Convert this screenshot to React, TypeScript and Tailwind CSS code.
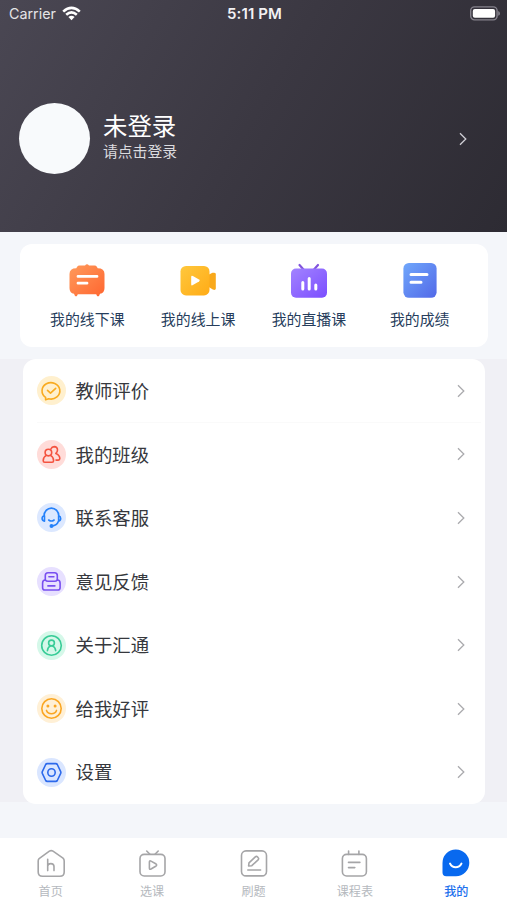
import type { ReactNode } from "react";

const Chevron = ({ className }: { className: string }) => (
  <svg className={className} width="8" height="14" viewBox="0 0 8 14" fill="none" stroke="currentColor" strokeWidth="1.3">
    <path d="M1 1.2 6.8 7 1 12.8" />
  </svg>
);

const shortcuts: { label: string; icon: ReactNode }[] = [
  {
    label: "我的线下课",
    icon: (
      <>
        <defs>
          <linearGradient id="orange" x1="0" y1="0" x2="1" y2="1">
            <stop stopColor="#ff9b5c" />
            <stop offset="1" stopColor="#ff6630" />
          </linearGradient>
        </defs>
        <path
          d="M8 4.9Q8.8 3.6 10.5 3.6H16L17 2.6Q18 2 19 2.6L20 3.6H25.5Q27.2 3.6 28 4.9L28.7 6.2Q35.5 6.2 35.5 12V26Q35.5 31.2 31 31.8L30 34Q28.5 34.8 27.8 33.4L27.2 32.3H8.8L8.2 33.4Q7.5 34.8 6 34L5 31.8Q.5 31.2 .5 26V12Q.5 6.2 7.3 6.2Z"
          fill="url(#orange)"
        />
        <path d="M9 14.4H28M9 21.2H18" stroke="#fff" strokeWidth="2.8" strokeLinecap="round" />
      </>
    ),
  },
  {
    label: "我的线上课",
    icon: (
      <>
        <defs>
          <linearGradient id="yellow" x1="0" y1="0" x2="1" y2="1">
            <stop stopColor="#ffc83d" />
            <stop offset="1" stopColor="#ffab16" />
          </linearGradient>
        </defs>
        <path d="M28 13 32.5 10.8Q35.8 10.2 35.8 12V26.5Q35.8 28.5 32.8 27.6L28 24.5Z" fill="#f9a91b" />
        <rect x=".5" y="4" width="29" height="29.4" rx="5.5" fill="url(#yellow)" />
        <path d="M11.2 15Q11.2 13.2 12.9 14.1L19 17.6Q20.5 18.6 19 19.6L12.9 23.1Q11.2 24 11.2 22.2Z" fill="#fff" />
      </>
    ),
  },
  {
    label: "我的直播课",
    icon: (
      <>
        <defs>
          <linearGradient id="purple" x1="0" y1="0" x2="1" y2="1">
            <stop stopColor="#a283ff" />
            <stop offset="1" stopColor="#7b4eff" />
          </linearGradient>
        </defs>
        <path d="M8.5 3 12.5 7.5M27 3 23 7.5" stroke="#8154dc" strokeWidth="2.2" strokeLinecap="round" />
        <rect x="0" y="6.5" width="36" height="29.3" rx="5" fill="url(#purple)" />
        <path d="M11.8 20.5V27M18.2 16.5V27M24.8 23V27" stroke="#fff" strokeWidth="3" strokeLinecap="round" />
      </>
    ),
  },
  {
    label: "我的成绩",
    icon: (
      <>
        <defs>
          <linearGradient id="blue" x1="0" y1="0" x2="1" y2="1">
            <stop stopColor="#70a7fb" />
            <stop offset="1" stopColor="#5269e8" />
          </linearGradient>
        </defs>
        <rect x="1.4" y="1" width="33.2" height="34.8" rx="5.5" fill="url(#blue)" />
        <path d="M9 12.5H25M9 20.3H19" stroke="#fff" strokeWidth="3" strokeLinecap="round" />
      </>
    ),
  },
];

const rows: { label: string; color: string; icon: ReactNode }[] = [
  {
    label: "教师评价",
    color: "bg-[#fff0ce] text-[#f9ab20]",
    icon: (
      <>
        <path d="M8.6 23.8V21.4A8.9 8.2 0 1 1 11.8 22.8Z" />
        <path d="m10.5 14.3 3 2.8 5.2-4.8" />
      </>
    ),
  },
  {
    label: "我的班级",
    color: "bg-[#ffdcd9] text-[#f4533f]",
    icon: (
      <>
        <circle cx="11.4" cy="12.6" r="3.3" />
        <path d="M9.4 15.4Q6.2 17 6.2 20.8Q6.2 22.3 7.7 22.3H15.1Q16.6 22.3 16.6 20.8Q16.6 17 13.4 15.4" />
        <path d="M14 8.8Q14.9 6.6 17.2 6.6Q20.5 6.8 20.5 10.1Q20.5 12.3 18.8 13.4Q22.8 15 22.8 18.6Q22.8 20.1 21.3 20.1H19" />
      </>
    ),
  },
  {
    label: "联系客服",
    color: "bg-[#dce8ff] text-[#2581fa]",
    icon: (
      <>
        <path d="M7 13A7.4 7.9 0 0 1 21.8 13M7.1 12.8Q5.1 13.2 5.1 15.5T7.5 18.1V12.8M21.8 12.8Q23.7 13.2 23.7 15.5T21.6 18.1V12.8M21.4 18.2Q20.2 21.9 15.7 22.9M11.7 17Q14.4 19.1 17.1 17" />
        <circle cx="14.5" cy="22.9" r="1.2" fill="currentColor" />
      </>
    ),
  },
  {
    label: "意见反馈",
    color: "bg-[#e7e0ff] text-[#784ff0]",
    icon: (
      <>
        <path d="M8.3 13V8.4Q8.3 5.7 11 5.7H17.6Q20.3 5.7 20.3 8.4V13" />
        <path d="M11.9 9.7H16.9M10.9 18.9H17.9" />
        <path d="M8.3 13Q5.6 13.2 5.6 16V20.7Q5.6 23 7.9 23H20.8Q23.1 23 23.1 20.7V16Q23.1 13.2 20.3 13Q19.3 14.3 17.7 14.3H11Q9.3 14.3 8.3 13Z" />
      </>
    ),
  },
  {
    label: "关于汇通",
    color: "bg-[#d5f8e9] text-[#38cc97]",
    icon: (
      <>
        <circle cx="14.5" cy="14.5" r="9.8" />
        <circle cx="14.5" cy="12" r="2.9" />
        <path d="M10.4 19.7Q10.7 16.1 13.7 14.8M18.7 19.7Q18.3 16.1 15.3 14.8" />
      </>
    ),
  },
  {
    label: "给我好评",
    color: "bg-[#fff0d6] text-[#faa622]",
    icon: (
      <>
        <circle cx="14.5" cy="14.5" r="9.7" />
        <path d="M9.5 16.4Q10.7 19.7 14.5 19.7T19.5 16.4" />
        <circle cx="10.9" cy="11.9" r=".7" fill="currentColor" />
        <circle cx="18.1" cy="11.9" r=".7" fill="currentColor" />
      </>
    ),
  },
  {
    label: "设置",
    color: "bg-[#dae6ff] text-[#2c69eb]",
    icon: (
      <>
        <path d="M10.2 5.6H18.8Q19.8 5.6 20.3 6.5L23.7 13.6Q24.1 14.5 23.7 15.4L20.3 22.5Q19.8 23.4 18.8 23.4H10.2Q9.2 23.4 8.7 22.5L5.3 15.4Q4.9 14.5 5.3 13.6L8.7 6.5Q9.2 5.6 10.2 5.6Z" />
        <circle cx="14.5" cy="14.5" r="3.7" />
      </>
    ),
  },
];

const tabs: { label: string; icon: ReactNode; active?: boolean }[] = [
  {
    label: "首页",
    icon: (
      <>
        <path d="M3.1 10.6 13.4 3.2Q15.2 2 17 3.2L27 10.1Q28.2 11.2 28.2 13V24Q28.2 28.3 23.9 28.3H6.5Q2.2 28.3 2.2 24V13Q2.2 11.3 3.1 10.6Z" />
        <path d="M11.7 11.2V22.6M11.7 18Q12 15.6 14.8 15.6Q18 15.6 18 18.6V22.6" />
      </>
    ),
  },
  {
    label: "选课",
    icon: (
      <>
        <rect x="3" y="6.4" width="25" height="21.6" rx="4.2" />
        <path d="m9.7 3 3 3M21.2 3l-3 3" />
        <path d="M12.4 14Q12.4 12.2 14 13.1L18.7 15.8Q20.6 17 18.7 18.2L14 21Q12.4 21.9 12.4 20Z" />
      </>
    ),
  },
  {
    label: "刷题",
    icon: (
      <>
        <rect x="2.5" y="2.9" width="25" height="25" rx="4.5" />
        <path d="M9.6 18 10 14.8 16.3 8.9Q17.5 7.9 18.6 9L19.2 9.7Q20.2 10.8 19.1 11.8L12.8 17.7ZM8.8 22H21.6" />
      </>
    ),
  },
  {
    label: "课程表",
    icon: (
      <>
        <rect x="2.4" y="6.4" width="24" height="21.6" rx="4.2" />
        <path d="M8.6 3V6.4M18.9 3V6.4M8.5 14.4H19.9M8.5 19.6H14.8" />
      </>
    ),
  },
  {
    label: "我的",
    active: true,
    icon: (
      <>
        <path d="M1.5 15.1A13.4 13.4 0 1 1 14.9 28.2H5.2Q1.5 28.2 1.5 24.5Z" fill="#0869ef" stroke="none" />
        <path d="M9 15.5Q10.9 19.3 14.7 19.3T20.5 15.5" stroke="#fff" strokeWidth="1.9" />
      </>
    ),
  },
];

export default function App() {
  return (
    <div className="flex h-[900px] w-[507px] flex-col overflow-hidden bg-[#f4f6fa] font-['Inter','Noto_Sans_CJK_SC',sans-serif]">
      <header className="flex h-[232px] shrink-0 flex-col bg-[linear-gradient(120deg,#4a4753,#3b3842_50%,#2d2b33)] text-white">
        <div className="grid h-7 grid-cols-3 items-center pl-[9px] pr-[7px] text-[14.3px]">
          <div className="flex items-center gap-[6px] text-[#e5e4e7]">
            <span>Carrier</span>
            <svg className="-mt-[2px]" width="19" height="15" viewBox="0 0 19 15" fill="none" stroke="#fff" strokeWidth="2.6">
              <path d="M1.2 5.6Q9.5-2 17.8 5.6M4.2 8.8Q9.5 4 14.8 8.8" />
              <path d="M6.4 11Q9.5 8.6 12.6 11L9.5 14.2Z" fill="#fff" stroke="none" />
            </svg>
          </div>
          <div className="whitespace-nowrap text-center text-[15px] font-semibold tracking-[0.12px] text-[#f2f1f3]">5:11 PM</div>
          <svg className="-mt-[2px] justify-self-end" width="31" height="15" viewBox="0 0 31 15" fill="none">
            <rect x="1.7" y=".9" width="26.4" height="13" rx="3.8" stroke="#85828c" strokeWidth="1.4" />
            <rect x="3.8" y="3" width="22.3" height="8.8" rx="2" fill="#fff" />
            <path d="M29.2 5V9.8Q31 9 31 7.4T29.2 5Z" fill="#85828c" />
          </svg>
        </div>
        <div className="mt-[75px] flex h-[71px] items-center pl-[19px] pr-10">
          <div className="size-[71px] rounded-full bg-[#f8fafc]" />
          <div className="-mt-[3px] ml-[13px] flex flex-col">
            <span className="text-[24.4px] leading-[29px]">未登录</span>
            <span className="text-[14.8px] leading-[22px] text-[#dcdbdf]">请点击登录</span>
          </div>
          <Chevron className="ml-auto text-[#d0cfd5]" />
        </div>
      </header>

      <section className="mx-auto mt-3 flex h-[103px] w-[468px] shrink-0 justify-center rounded-xl bg-white pt-[18px]">
        {shortcuts.map((item) => (
          <div key={item.label} className="flex w-[110.8px] flex-col items-center">
            <svg width="36" height="36" viewBox="0 0 36 36" fill="none">
              {item.icon}
            </svg>
            <span className="mt-[11px] text-[14.9px] leading-[22px] text-[#263d5c]">{item.label}</span>
          </div>
        ))}
      </section>

      <div className="mt-3 h-[445px] shrink-0 bg-[linear-gradient(#f0f0f5,#f0f0f5)] bg-[length:100%_443px] bg-no-repeat px-[22.5px]">
        <ul className="flex h-full flex-col rounded-[13px] bg-white">
          {rows.map((row, index) => (
            <li key={row.label} className="flex flex-1 pl-[14px] pr-1">
              <div className={`flex flex-1 items-center border-b pr-4 pt-px ${index === 0 ? "border-[#fafafa]" : "border-transparent"}`}>
                <span className={`flex size-[29px] items-center justify-center rounded-full ${row.color}`}>
                  <svg width="29" height="29" viewBox="0 0 29 29" fill="none" stroke="currentColor" strokeWidth="1.6" strokeLinecap="round" strokeLinejoin="round">
                    {row.icon}
                  </svg>
                </span>
                <span className="ml-[10px] flex-1 pt-[2px] text-[18.4px] text-[#36383d]">{row.label}</span>
                <Chevron className="text-[#aaaaae]" />
              </div>
            </li>
          ))}
        </ul>
      </div>

      <nav className="mt-auto flex h-[62px] shrink-0 bg-white pt-[10px]">
        {tabs.map((tab) => (
          <div key={tab.label} className="flex flex-1 flex-col items-center">
            <svg className="shrink-0" width="30" height="30" viewBox="0 0 30 30" fill="none" stroke="#a5a5a7" strokeWidth="1.6" strokeLinecap="round" strokeLinejoin="round">
              {tab.icon}
            </svg>
            <span className={`mt-[6px] text-[12.1px] leading-4 ${tab.active ? "font-medium text-[#1d70ed]" : "text-[#b5b9be]"}`}>{tab.label}</span>
          </div>
        ))}
      </nav>
    </div>
  );
}
